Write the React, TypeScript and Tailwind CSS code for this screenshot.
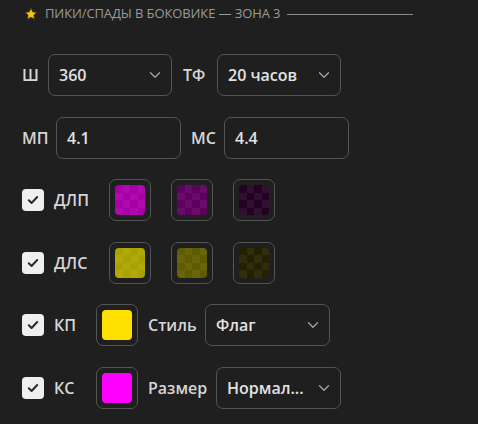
import React from 'react'

const font = { fontFamily: '"Open Sans", "Noto Sans", sans-serif' }

const Chevron = () => (
  <svg width="12" height="8" viewBox="0 0 12 8" fill="none" aria-hidden>
    <path d="M1.5 1.75 6 6.25l4.5-4.5" stroke="#a3a3a3" strokeWidth="1.3" strokeLinecap="round" strokeLinejoin="round" />
  </svg>
)

const Select = ({ value, className }: { value: string; className: string }) => (
  <div
    className={`h-[42px] rounded-[7px] border border-[#545454] flex items-center justify-between pl-2.5 pr-2.5 text-[16px] font-semibold text-[#e2e2e2] shrink-0 ${className}`}
  >
    <span>{value}</span>
    <Chevron />
  </div>
)

const Input = ({ value }: { value: string }) => (
  <div className="h-[42px] w-[125px] rounded-[7px] border border-[#545454] flex items-center pl-2.5 text-[16px] font-semibold text-[#e2e2e2] shrink-0">
    {value}
  </div>
)

const Checkbox = () => (
  <div className="w-[22px] h-[22px] rounded-[4px] bg-[#efefef] flex items-center justify-center shrink-0">
    <svg width="12" height="10" viewBox="0 0 12 10" fill="none" aria-hidden>
      <path d="M1.8 5.2 4.6 8 10.2 2" stroke="#2b2b2b" strokeWidth="2" strokeLinecap="round" strokeLinejoin="round" />
    </svg>
  </div>
)

const Label = ({ children, className = '' }: { children: React.ReactNode; className?: string }) => (
  <span className={`text-[16px] font-semibold text-[#d6d6d6] whitespace-nowrap shrink-0 ${className}`}>{children}</span>
)

const Checker = ({ a, b }: { a: string; b: string }) => (
  <div className="w-[30px] h-[30px] rounded-[4px] overflow-hidden grid grid-cols-4 grid-rows-4">
    {Array.from({ length: 16 }).map((_, i) => {
      const dark = (Math.floor(i / 4) + i) % 2 === 0
      return <div key={i} style={{ background: dark ? a : b }} />
    })}
  </div>
)

const Swatch = ({ children }: { children: React.ReactNode }) => (
  <div className="w-[42px] h-[42px] rounded-[7px] border border-[#545454] flex items-center justify-center shrink-0">
    {children}
  </div>
)

const magenta = [
  ['#a800a8', '#ae0aae'],
  ['#5e005e', '#690c69'],
  ['#240022', '#301030'],
]

const yellow = [
  ['#aaa200', '#b0a90e'],
  ['#5e5b00', '#68650d'],
  ['#232200', '#2e2e0e'],
]

export default function App() {
  return (
    <div className="w-[478px] h-[424px] bg-[#1f1f1f] overflow-hidden pl-[22px]" style={font}>
      <div className="flex items-center h-[28px] pl-[2px] gap-[7px]">
        <svg width="14" height="14" viewBox="0 0 24 24" aria-hidden>
          <path
            d="M12 1.8l3.1 6.6 7.1.8-5.3 4.9 1.5 7.1L12 17.6l-6.4 3.6 1.5-7.1-5.3-4.9 7.1-.8z"
            fill="#f8c21c"
            stroke="#4a3800"
            strokeWidth="1.6"
            strokeLinejoin="round"
          />
        </svg>
        <span className="text-[13px] text-[#9a9a9a] tracking-[-0.1px]">ПИКИ/СПАДЫ В БОКОВИКЕ — ЗОНА 3</span>
        <div className="w-[126px] h-px bg-[#8a8a8a]" />
      </div>

      <div className="flex flex-col gap-[20.6px] mt-[26px]">
        <div className="flex items-center gap-2.5">
          <Label className="w-[16px]">Ш</Label>
          <Select value="360" className="w-[124px]" />
          <Label className="w-[24px] ml-px">ТФ</Label>
          <Select value="20 часов" className="w-[124px]" />
        </div>

        <div className="flex items-center gap-2.5">
          <Label className="w-[24px]">МП</Label>
          <Input value="4.1" />
          <Label className="w-[23px]">МС</Label>
          <Input value="4.4" />
        </div>

        <div className="flex items-center">
          <Checkbox />
          <Label className="ml-2.5 w-[55px]">ДЛП</Label>
          <div className="flex gap-5">
            {magenta.map(([a, b], i) => (
              <Swatch key={i}>
                <Checker a={a} b={b} />
              </Swatch>
            ))}
          </div>
        </div>

        <div className="flex items-center">
          <Checkbox />
          <Label className="ml-2.5 w-[55px]">ДЛС</Label>
          <div className="flex gap-5">
            {yellow.map(([a, b], i) => (
              <Swatch key={i}>
                <Checker a={a} b={b} />
              </Swatch>
            ))}
          </div>
        </div>

        <div className="flex items-center">
          <Checkbox />
          <Label className="ml-2.5 w-[42px]">КП</Label>
          <Swatch>
            <div className="w-[30px] h-[30px] rounded-[4px] bg-[#ffe000]" />
          </Swatch>
          <Label className="ml-2.5 w-[47px]">Стиль</Label>
          <Select value="Флаг" className="w-[125px] ml-2.5" />
        </div>

        <div className="flex items-center">
          <Checkbox />
          <Label className="ml-2.5 w-[42px]">КС</Label>
          <Swatch>
            <div className="w-[30px] h-[30px] rounded-[4px] bg-[#ff00ff]" />
          </Swatch>
          <Label className="ml-2.5 w-[58px]">Размер</Label>
          <Select value="Нормал..." className="w-[125px] ml-2.5" />
        </div>
      </div>
    </div>
  )
}
